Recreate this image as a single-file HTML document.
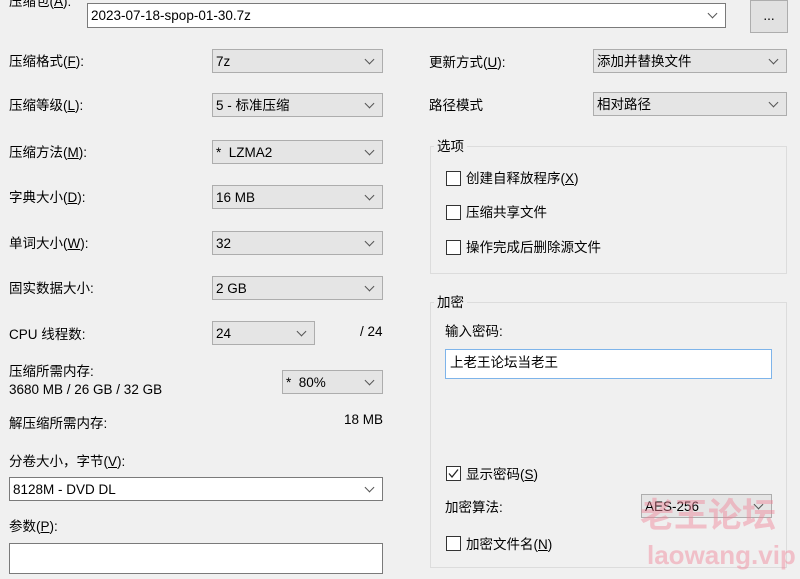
<!DOCTYPE html>
<html><head><meta charset="utf-8"><style>
*{box-sizing:border-box;margin:0;padding:0}
body{width:800px;height:579px;background:#f0f0f0;position:relative;overflow:hidden;font-family:"Liberation Sans","Noto Sans CJK SC",sans-serif;font-size:13.5px;color:#000}
.a{position:absolute;white-space:nowrap}
.cb{position:absolute;background:#e5e5e5;border:1px solid #adadad;height:24px;line-height:23px;padding-left:3px}
.cb.w{background:#fff;border-color:#7a7a7a}
.cb:after{content:"";position:absolute;right:9px;top:6px;width:6px;height:6px;border-right:1px solid #555;border-bottom:1px solid #555;transform:rotate(45deg)}
.grp{position:absolute;border:1px solid #dcdcdc}
.gt{position:absolute;background:#f0f0f0;padding:0 3px}
.ck{position:absolute;width:15px;height:15px;border:1px solid #333;background:#fff}
u{text-decoration:underline}
</style></head><body>
<div class="a" style="left:9px;top:-10px">压缩包(<u>A</u>):</div>
<div class="cb w" style="left:87px;top:3px;width:639px;height:25px;line-height:23px">2023-07-18-spop-01-30.7z</div>
<div class="a" style="left:750px;top:0;width:38px;height:33px;border:1px solid #adadad;background:#e1e1e1;text-align:center;line-height:30px">...</div>

<div class="a" style="left:9px;top:50px">压缩格式(<u>F</u>):</div>
<div class="cb" style="left:212px;top:49px;width:171px">7z</div>
<div class="a" style="left:9px;top:94px">压缩等级(<u>L</u>):</div>
<div class="cb" style="left:212px;top:93px;width:171px">5 - 标准压缩</div>
<div class="a" style="left:9px;top:141px">压缩方法(<u>M</u>):</div>
<div class="cb" style="left:212px;top:140px;width:171px">* &nbsp;LZMA2</div>
<div class="a" style="left:9px;top:186px">字典大小(<u>D</u>):</div>
<div class="cb" style="left:212px;top:185px;width:171px">16 MB</div>
<div class="a" style="left:9px;top:232px">单词大小(<u>W</u>):</div>
<div class="cb" style="left:212px;top:231px;width:171px">32</div>
<div class="a" style="left:9px;top:277px">固实数据大小:</div>
<div class="cb" style="left:212px;top:276px;width:171px">2 GB</div>
<div class="a" style="left:9px;top:323px">CPU 线程数:</div>
<div class="cb" style="left:212px;top:321px;width:103px">24</div>
<div class="a" style="left:360px;top:324px">/ 24</div>
<div class="a" style="left:9px;top:360px">压缩所需内存:</div>
<div class="a" style="left:9px;top:382px">3680 MB / 26 GB / 32 GB</div>
<div class="cb" style="left:282px;top:370px;width:101px">* &nbsp;80%</div>
<div class="a" style="left:9px;top:412px">解压缩所需内存:</div>
<div class="a" style="left:344px;top:412px">18 MB</div>
<div class="a" style="left:9px;top:450px">分卷大小，字节(<u>V</u>):</div>
<div class="cb w" style="left:9px;top:477px;width:374px">8128M - DVD DL</div>
<div class="a" style="left:9px;top:515px">参数(<u>P</u>):</div>
<div class="a" style="left:9px;top:543px;width:374px;height:31px;background:#fff;border:1px solid #7a7a7a"></div>

<div class="a" style="left:429px;top:51px">更新方式(<u>U</u>):</div>
<div class="cb" style="left:593px;top:49px;width:194px">添加并替换文件</div>
<div class="a" style="left:429px;top:94px">路径模式</div>
<div class="cb" style="left:593px;top:92px;width:194px">相对路径</div>

<div class="grp" style="left:430px;top:146px;width:357px;height:128px"></div>
<div class="gt" style="left:434px;top:135px">选项</div>
<div class="ck" style="left:446px;top:171px"></div><div class="a" style="left:466px;top:167px">创建自释放程序(<u>X</u>)</div>
<div class="ck" style="left:446px;top:205px"></div><div class="a" style="left:466px;top:201px">压缩共享文件</div>
<div class="ck" style="left:446px;top:240px"></div><div class="a" style="left:466px;top:236px">操作完成后删除源文件</div>

<div class="grp" style="left:430px;top:302px;width:357px;height:266px"></div>
<div class="gt" style="left:434px;top:291px">加密</div>
<div class="a" style="left:445px;top:320px">输入密码:</div>
<div class="a" style="left:445px;top:349px;width:327px;height:30px;background:#fff;border:1px solid #7eb4ea;padding:1px 4px">上老王论坛当老王</div>
<div class="ck" style="left:446px;top:466px"><svg width="13" height="13" style="position:absolute;left:0;top:0"><path d="M2 6.5L5 10L11 2.5" fill="none" stroke="#222" stroke-width="1.3"/></svg></div>
<div class="a" style="left:466px;top:463px">显示密码(<u>S</u>)</div>
<div class="a" style="left:445px;top:496px">加密算法:</div>
<div class="cb" style="left:641px;top:494px;width:131px">AES-256</div>
<div class="ck" style="left:446px;top:536px"></div><div class="a" style="left:466px;top:533px">加密文件名(<u>N</u>)</div>

<div class="a" style="left:640px;top:496px;font-size:34px;line-height:40px;font-weight:bold;color:rgba(240,130,150,0.45)">老王论坛</div>
<div class="a" style="left:647px;top:539px;font-size:26px;line-height:32px;font-weight:bold;color:rgba(240,130,150,0.45)">laowang.vip</div>
</body></html>
